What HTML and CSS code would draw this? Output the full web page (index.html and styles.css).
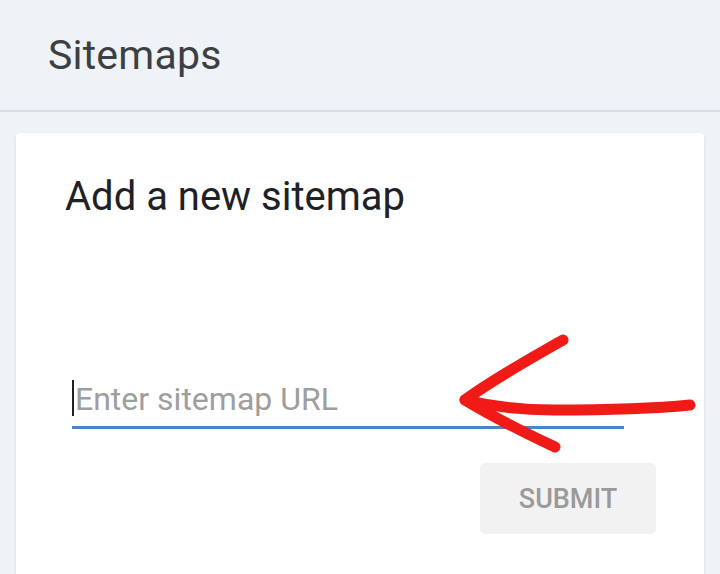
FILE: index.html
```html
<!DOCTYPE html>
<html lang="en">
<head>
  <meta charset="UTF-8" />
  <meta name="viewport" content="width=device-width, initial-scale=1.0"/>
  <title>Sitemaps</title>
  <link rel="stylesheet" href="styles.css">
</head>
<body>
  <header class="top-bar">
    <h1>Sitemaps</h1>
  </header>

  <main class="content">
    <section class="card">
      <h2>Add a new sitemap</h2>
      <div class="hint"></div>
      <div class="field">
        <span class="caret"></span>
        <input type="text" placeholder="Enter sitemap URL" />
      </div>
      <div class="actions">
        <button disabled>SUBMIT</button>
      </div>

      <svg class="arrow" width="260" height="140" viewBox="0 0 260 140">
        <path d="M123 20 C95 36 55 58 25 80 C50 95 85 113 115 127" />
        <path d="M25 80 C50 86 80 90 113 90 C170 90 220 88 250 85" />
      </svg>
    </section>
  </main>
</body>
</html>
```

FILE: styles.css
```css
body {
  margin: 0;
  font-family: Roboto, "Noto Sans", sans-serif;
  background-color: #eff2f7;
  color: #3c4043;
  height: 574px;
  overflow: hidden;
}
.top-bar {
  height: 110px;
  border-bottom: 2px solid #d9dde3;
  padding-left: 48px;
  display: flex;
  align-items: center;
}
.top-bar h1 {
  margin: 0;
  font-size: 41px;
  font-weight: 400;
  color: #3c4043;
  letter-spacing: 0.2px;
}
.content {
  padding: 21px 16px 0 16px;
}
.card {
  position: relative;
  background: #fff;
  border-radius: 4px 4px 0 0;
  box-shadow: 0 1px 3px rgba(0,0,0,0.12);
  height: 460px;
  padding: 40px 48px 0 49px;
  box-sizing: border-box;
}
.card h2 {
  margin: 0;
  font-size: 40px;
  font-weight: 400;
  color: #202124;
}
.hint {
  height: 154px;
}
.field {
  position: relative;
  width: 552px;
  margin-left: 7px;
  border-bottom: 3px solid #4a86c8;
  height: 52px;
}
.field input {
  border: none;
  outline: none;
  font-family: Roboto, sans-serif;
  font-size: 32px;
  width: 100%;
  height: 50px;
  padding: 0 0 0 3px;
  background: transparent;
}
.field input::placeholder {
  color: #9e9e9e;
}
.caret {
  position: absolute;
  left: 0;
  top: 6px;
  width: 2px;
  height: 36px;
  background: #202124;
}
.actions {
  display: flex;
  justify-content: flex-end;
  margin-top: 34px;
}
.actions button {
  width: 176px;
  height: 71px;
  border: none;
  border-radius: 5px;
  background: #f2f2f2;
  color: #9a9a9a;
  font-family: Roboto, sans-serif;
  font-size: 27px;
  font-weight: 500;
}
.arrow {
  position: absolute;
  left: 424px;
  top: 187px;
  overflow: visible;
}
.arrow path {
  fill: none;
  stroke: #f01a17;
  stroke-width: 11;
  stroke-linecap: round;
  stroke-linejoin: round;
}
```
